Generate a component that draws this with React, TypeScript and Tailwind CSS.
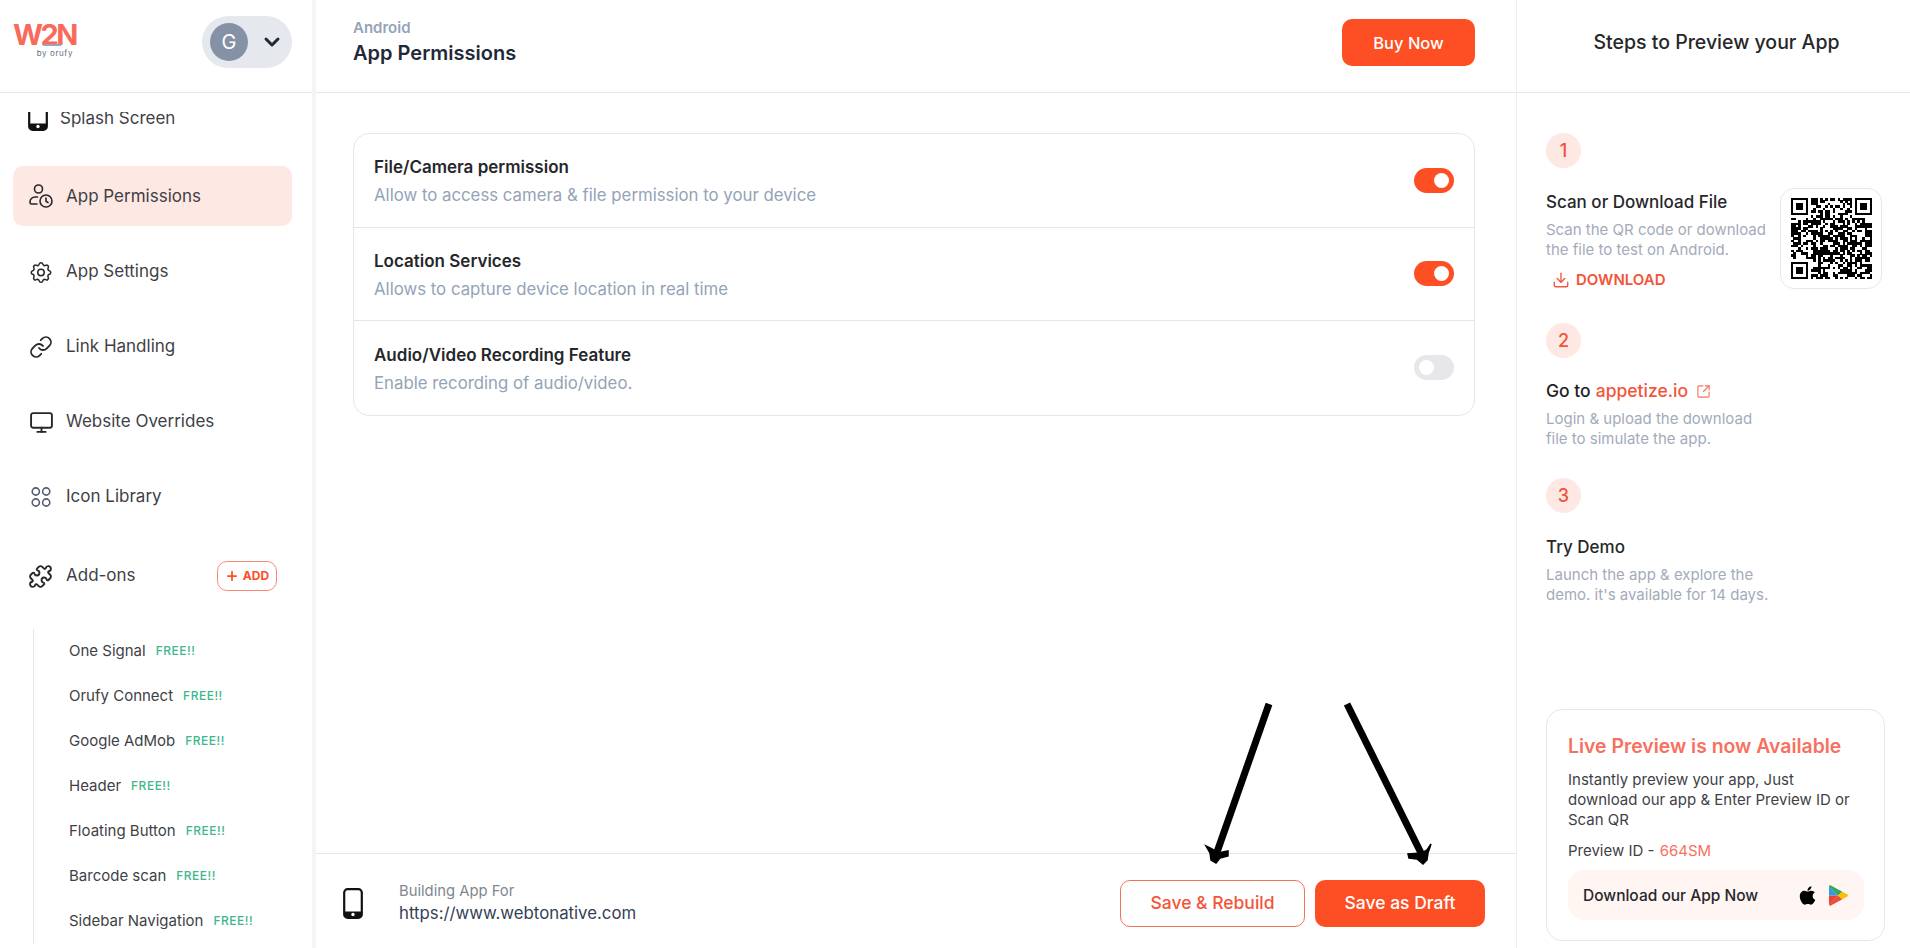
import React from 'react';
import { ChevronDown, Download, Link, Monitor, Plus, Puzzle, SquareArrowOutUpRight } from 'lucide-react';
import { FaApple } from 'react-icons/fa';
import { TbSettings } from 'react-icons/tb';

const PhoneIcon = ({ className }: { className: string }) => (
  <svg viewBox="0 0 20 31" className={className}>
    <rect x="1.2" y="1.2" width="17.6" height="28.6" rx="3.4" fill="none" stroke="#111" strokeWidth="2.2" />
    <path d="M1.2 23.5h17.6v3a3.3 3.3 0 0 1-3.3 3.3h-11a3.3 3.3 0 0 1-3.3-3.3z" fill="#111" />
    <circle cx="10" cy="26.5" r="1.7" fill="#fff" />
  </svg>
);

const PermissionIcon = () => (
  <svg viewBox="0 0 26 26" className="w-[26px] h-[26px]" fill="none" stroke="#27272a" strokeWidth="1.6" strokeLinecap="round">
    <circle cx="10.5" cy="6" r="4" />
    <path d="M9.5 14H7a5 5 0 0 0-5 5v0.5a1.5 1.5 0 0 0 1.500 1.500H9" />
    <circle cx="18" cy="18" r="6" />
    <path d="M18 15v3.300l2 1.200" />
  </svg>
);

const LibraryIcon = () => (
  <svg viewBox="0 0 24 24" className="w-6 h-6" fill="none" stroke="#565b75" strokeWidth="1.6">
    <circle cx="6.800" cy="6.500" r="3.600" />
    <circle cx="17.200" cy="6.500" r="3.600" />
    <circle cx="6.800" cy="17.500" r="3.600" />
    <circle cx="17.200" cy="17.500" r="3.600" />
  </svg>
);

const PlayIcon = () => (
  <svg viewBox="0 0 20 22" className="w-[19px] h-[21px]">
    <path d="M0 1.500V11h9.500z" fill="#2f9bf0" />
    <path d="M0 20.500V11h9.500z" fill="#ea4335" />
    <path d="M0 1.500C0 .5 1 0 2 .5L14 7l-4.500 4z" fill="#34a853" />
    <path d="M0 20.500c0 1 1 1.500 2 1L14 15l-4.500-4z" fill="#e94d3c" />
    <path d="M14 7l5 2.800c1.200.7 1.200 1.700 0 2.400L14 15l-4.500-4z" fill="#fbbc04" />
  </svg>
);

// Pseudo random modules with the three finder squares, good enough for a preview QR
const QrCode = () => {
  const size = 33;
  let seed = 664;
  const next = () => {
    seed = (seed * 1103515245 + 12345) & 0x7fffffff;
    return (seed >> 16) % 100;
  };
  const inFinder = (x: number, y: number) =>
    (x < 8 && y < 8) || (x >= size - 8 && y < 8) || (x < 8 && y >= size - 8);
  const rects: React.ReactNode[] = [];
  for (let y = 0; y < size; y++) {
    for (let x = 0; x < size; x++) {
      const on = next() < 54;
      if (!inFinder(x, y) && on) rects.push(<rect key={`${x}-${y}`} x={x} y={y} width="1.02" height="1.02" />);
    }
  }
  const finder = (x: number, y: number) => (
    <g key={`f${x}${y}`}>
      <rect x={x} y={y} width="7" height="7" />
      <rect x={x + 1} y={y + 1} width="5" height="5" fill="#fff" />
      <rect x={x + 2} y={y + 2} width="3" height="3" />
    </g>
  );
  return (
    <svg viewBox="0 0 33 33" className="w-[81px] h-[81px]" shapeRendering="crispEdges">
      {rects}
      {finder(0, 0)}
      {finder(26, 0)}
      {finder(0, 26)}
    </svg>
  );
};

const navItems = [
  { label: 'App Settings', icon: <TbSettings size={29} strokeWidth={1.4} color="#27272a" /> },
  { label: 'Link Handling', icon: <Link size={24} strokeWidth={1.8} color="#27272a" /> },
  { label: 'Website Overrides', icon: <Monitor size={25} strokeWidth={1.8} color="#27272a" /> },
  { label: 'Icon Library', icon: <LibraryIcon /> },
];

const addons = ['One Signal', 'Orufy Connect', 'Google AdMob', 'Header', 'Floating Button', 'Barcode scan', 'Sidebar Navigation'];

const permissions = [
  { title: 'File/Camera permission', desc: 'Allow to access camera & file permission to your device', on: true },
  { title: 'Location Services', desc: 'Allows to capture device location in real time', on: true },
  { title: 'Audio/Video Recording Feature', desc: 'Enable recording of audio/video.', on: false },
];

const Toggle = ({ on }: { on: boolean }) => (
  <div className={`w-10 h-[25px] rounded-full flex items-center px-[5px] ${on ? 'bg-[#fd4e24] justify-end' : 'bg-[#e5e7eb] justify-start'}`}>
    <div className="w-[15px] h-[15px] rounded-full bg-white" />
  </div>
);

const StepNumber = ({ n }: { n: number }) => (
  <div className="w-[35px] h-[35px] rounded-full bg-[#fde8e4] flex items-center justify-center text-[18px] font-medium text-[#f0533a]">{n}</div>
);

export default function App() {
  return (
    <div className="relative flex h-screen w-full overflow-hidden bg-white font-[Inter,sans-serif] text-[#27272a]">
      {/* Sidebar */}
      <aside className="w-[316px] shrink-0 flex flex-col border-r-4 border-[#f4f5f6]">
        <div className="h-[93px] shrink-0 border-b border-[#e5e7eb] flex items-start justify-between pl-[13px] pr-[20px] pt-[16px]">
          <div className="relative w-[60px] pt-[7px] leading-none">
            <div className="text-[29px] font-bold tracking-[-2.5px] text-[#fa6a5a] leading-[24px]">W2N</div>
            <div className="absolute left-[30px] top-[28px] w-[18px] h-[2px] bg-[#9aa5b8]" />
            <div className="text-[8px] tracking-[0.6px] text-[#5b6b85] text-right mt-[2px]">by orufy</div>
          </div>
          <div className="w-[90px] h-[52px] rounded-full bg-[#e5e9ee] flex items-center pl-[8px] gap-[12px]">
            <div className="w-[38px] h-[38px] rounded-full bg-[#8592a6] flex items-center justify-center text-white text-[20px]">G</div>
            <ChevronDown size={24} strokeWidth={3} color="#1f2937" />
          </div>
        </div>
        <nav className="flex-1 overflow-hidden pl-[13px] pr-[20px]">
          {/* Splash Screen row is scrolled half under the header */}
          <div className="h-[20px] mt-[19px] mb-[34px] overflow-hidden flex items-start gap-[12px] pl-[15px]">
            <PhoneIcon className="w-[20px] h-[31px] -mt-[12px] shrink-0" />
            <span className="text-[17px] leading-[24px] text-[#3f3f46] -mt-[6px]">Splash Screen</span>
          </div>
          <div className="flex items-center gap-[12px] h-[60px] rounded-[10px] bg-[#fee8e3] pl-[15px] mb-[16px]">
            <PermissionIcon />
            <span className="text-[17px] text-[#3f3f46] mt-[2px]">App Permissions</span>
          </div>
          {navItems.map(item => (
            <div key={item.label} className="flex items-center gap-[12px] h-[60px] pl-[15px] mb-[15px]">
              <span className="w-[26px] flex justify-center">{item.icon}</span>
              <span className="text-[17px] text-[#3f3f46]">{item.label}</span>
            </div>
          ))}
          <div className="flex items-center h-[60px] mt-[19px] pl-[15px] pr-[15px]">
            <Puzzle size={25} strokeWidth={1.8} color="#27272a" />
            <span className="ml-[13px] text-[17px] text-[#3f3f46]">Add-ons</span>
            <div className="ml-auto w-[60px] h-[30px] rounded-[10px] border border-[#f98a76] flex items-center justify-center gap-[4px] text-[12px] font-bold text-[#fd4e24]">
              <Plus size={14} strokeWidth={3} />
              ADD
            </div>
          </div>
          <ul className="ml-[20px] mt-[23px] border-l border-[#e5e7eb] pl-[35px]">
            {addons.map(name => (
              <li key={name} className="h-[45px] flex items-center gap-[10px]">
                <span className="text-[15px] text-[#3f3f46]">{name}</span>
                <span className="text-[12px] font-medium tracking-[0.5px] text-[#3fb68b] -mt-[2px]">FREE!!</span>
              </li>
            ))}
          </ul>
        </nav>
      </aside>

      {/* Main */}
      <main className="flex-1 min-w-0 flex flex-col">
        <header className="h-[93px] shrink-0 border-b border-[#e5e7eb] flex items-center justify-between pl-[37px] pr-[41px] pb-[8px]">
          <div>
            <div className="text-[15px] font-semibold text-[#94a3b8] leading-[20px]">Android</div>
            <div className="text-[20px] font-semibold text-[#1f2937] leading-[28px] mt-[1px]">App Permissions</div>
          </div>
          <button className="w-[133px] h-[47px] rounded-[10px] bg-[#fd4e24] text-white text-[16.500px] font-medium pt-[2px]">Buy Now</button>
        </header>
        <div className="flex-1 pt-[40px] pl-[37px] pr-[41px]">
          <div className="border border-[#e5e7eb] rounded-[16px]">
            {permissions.map((p, i) => (
              <div key={p.title} className={`h-[93.500px] flex items-center justify-between px-[20px] ${i < 2 ? 'border-b border-[#e5e7eb]' : ''}`}>
                <div className="mt-[2px]">
                  <div className="text-[17px] font-semibold text-[#27272a] leading-[24px]">{p.title}</div>
                  <div className="text-[16.800px] text-[#94a3b8] leading-[24px] mt-[4px]">{p.desc}</div>
                </div>
                <Toggle on={p.on} />
              </div>
            ))}
          </div>
        </div>
        <footer className="h-[95px] shrink-0 border-t border-[#e5e7eb] flex items-center pl-[27px] pr-[31px] pt-[4px]">
          <PhoneIcon className="w-[20px] h-[31px]" />
          <div className="ml-[36px]">
            <div className="text-[14.800px] text-[#7f8790] leading-[20px]">Building App For</div>
            <div className="text-[16.800px] text-[#334155] leading-[24px]">https://www.webtonative.com</div>
          </div>
          <button className="ml-auto w-[185px] h-[47px] rounded-[10px] border border-[#f2735c] text-[#f2553a] text-[17.500px] font-medium">Save &amp; Rebuild</button>
          <button className="ml-[10px] w-[170px] h-[47px] rounded-[10px] bg-[#fd4e24] text-white text-[17.500px] font-medium">Save as Draft</button>
        </footer>
      </main>

      {/* Right panel */}
      <aside className="w-[394px] shrink-0 flex flex-col border-l border-[#eceef1]">
        <div className="h-[93px] shrink-0 border-b border-[#e5e7eb] flex items-center justify-center pb-[6px] pl-[6px] text-[19.500px] font-medium text-[#27272a]">
          Steps to Preview your App
        </div>
        <div className="flex-1 flex flex-col pl-[29px] pr-[28px] pt-[40px] pb-[7px]">
          <StepNumber n={1} />
          <div className="flex justify-between mt-[20px]">
            <div>
              <div className="text-[17px] font-medium leading-[24px] text-[#27272a] mt-[2px]">Scan or Download File</div>
              <div className="text-[15px] text-[#a3abba] leading-[20px] mt-[6px]">Scan the QR code or download<br />the file to test on Android.</div>
              <div className="flex items-center gap-[6px] pl-[6px] mt-[10px] text-[15px] font-semibold text-[#f2553a] leading-[20px]">
                <Download size={18} strokeWidth={1.8} />
                DOWNLOAD
              </div>
            </div>
            <div className="w-[102px] h-[101px] shrink-0 rounded-[14px] border border-[#e5e7eb] flex items-center justify-center">
              <QrCode />
            </div>
          </div>
          <div className="mt-[33px]"><StepNumber n={2} /></div>
          <div className="flex items-center mt-[21px] text-[17.500px] font-medium leading-[24px] text-[#1f1f23]">
            Go to <span className="ml-[5px] text-[#f2553a]">appetize.io</span>
            <SquareArrowOutUpRight size={15} strokeWidth={1.8} color="#f2735c" className="ml-[8px]" />
          </div>
          <div className="text-[15px] text-[#a3abba] leading-[20px] mt-[6px]">Login &amp; upload the download<br />file to simulate the app.</div>
          <div className="mt-[29px]"><StepNumber n={3} /></div>
          <div className="text-[17px] font-medium leading-[24px] text-[#27272a] mt-[22px]">Try Demo</div>
          <div className="text-[15px] text-[#a3abba] leading-[20px] mt-[6px]">Launch the app &amp; explore the<br />demo. it's available for 14 days.</div>

          <div className="mt-auto w-[339px] h-[232px] rounded-[16px] border border-[#e5e7eb] pl-[21px] pr-[20px] pt-[22px]">
            <div className="text-[19.400px] font-semibold text-[#f87060] leading-[28px]">Live Preview is now Available</div>
            <div className="text-[15px] text-[#3f3f46] leading-[20px] mt-[10px]">Instantly preview your app, Just<br />download our app &amp; Enter Preview ID or<br />Scan QR</div>
            <div className="text-[15px] text-[#3f3f46] leading-[20px] mt-[11px]">Preview ID - <span className="ml-[1px] text-[#f87060]">664SM</span></div>
            <div className="mt-[9px] h-[50px] rounded-[16px] bg-[#fff5f3] flex items-center pl-[15px] pr-[16px]">
              <span className="text-[15.500px] font-medium text-[#27272a] mt-[2px]">Download our App Now</span>
              <FaApple size={21} color="#000" className="ml-auto" />
              <span className="ml-[11px] flex"><PlayIcon /></span>
            </div>
          </div>
        </div>
      </aside>

      {/* Hand drawn annotation arrows on top of the screenshot */}
      <svg className="absolute left-0 top-0 pointer-events-none" width="1910" height="948" fill="none" stroke="#000" strokeWidth="7">
        <path d="M1269 704 L1216 855" />
        <path d="M1347 704 L1422 855" />
        <path d="M1206 846 L1212 849 L1218 853 L1228 851 L1228 856 L1220 858 L1216 863 L1211 860 L1210 853z" fill="#000" stroke="#000" strokeWidth="1.500" />
        <path d="M1431 844 L1427 850 L1422 853 L1408 854 L1409 858 L1417 859 L1423 864 L1427 860 L1428 853z" fill="#000" stroke="#000" strokeWidth="1.500" />
      </svg>
    </div>
  );
}
